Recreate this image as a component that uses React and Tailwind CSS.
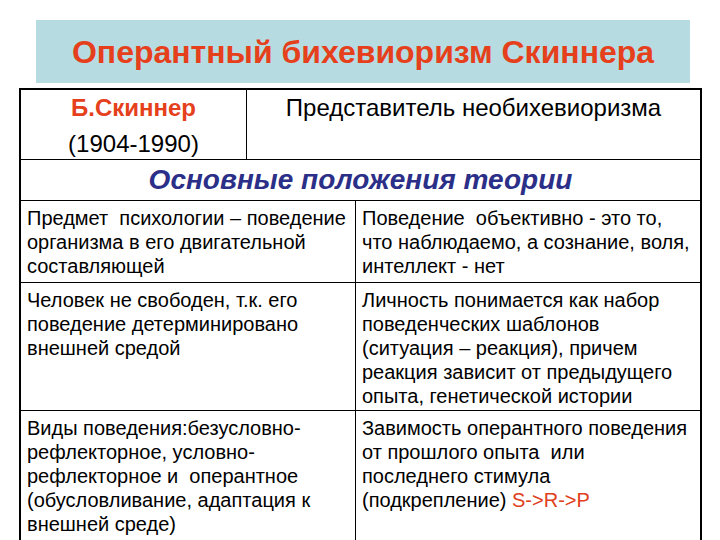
const Cell = ({ children, className = "" }) => (
  <div className={`px-[6px] pt-[5px] text-[20px] leading-[24px] text-black whitespace-nowrap ${className}`}>
    {children}
  </div>
);

const rows = [
  {
    left: (
      <>
        Предмет&nbsp; психологии – поведение
        <br />
        организма в его двигательной
        <br />
        составляющей
      </>
    ),
    right: (
      <>
        Поведение&nbsp; объективно - это то,
        <br />
        что наблюдаемо, а сознание, воля,
        <br />
        интеллект - нет
      </>
    ),
    h: "h-[82px]",
  },
  {
    left: (
      <>
        Человек не свободен, т.к. его
        <br />
        поведение детерминировано
        <br />
        внешней средой
      </>
    ),
    right: (
      <>
        Личность понимается как набор
        <br />
        поведенческих шаблонов
        <br />
        (ситуация – реакция), причем
        <br />
        реакция зависит от предыдущего
        <br />
        опыта, генетической истории
      </>
    ),
    h: "h-[128px]",
  },
  {
    left: (
      <>
        Виды поведения:безусловно-
        <br />
        рефлекторное, условно-
        <br />
        рефлекторное и&nbsp; оперантное
        <br />
        (обусловливание, адаптация к
        <br />
        внешней среде)
      </>
    ),
    right: (
      <>
        Завимость оперантного поведения
        <br />
        от прошлого опыта&nbsp; или
        <br />
        последнего стимула
        <br />
        (подкрепление) <span className="text-[#e0401c]">S-&gt;R-&gt;P</span>
      </>
    ),
    h: "h-[140px]",
  },
];

export default function App() {
  return (
    <div
      className="w-[720px] h-[540px] overflow-hidden bg-white"
      style={{ fontFamily: '"Liberation Sans", Arial, sans-serif' }}
    >
      <div className="pt-[20px] pl-[36px]">
        <div className="h-[63px] w-[654px] bg-[#b6dce2] flex items-center justify-center">
          <h1 className="text-[32px] font-bold text-[#e5401b] whitespace-nowrap">
            Оперантный бихевиоризм Скиннера
          </h1>
        </div>
      </div>

      <div className="mt-[5px] ml-[19px] w-[683px] border-2 border-black">
        <div className="grid grid-cols-[226px_1fr] h-[70px] border-b border-black">
          <div className="border-r border-black flex flex-col items-center pt-[4px] text-[24px] leading-[28px]">
            <span className="font-bold text-[#e5401b]">Б.Скиннер</span>
            <span className="mt-[8px] text-black">(1904-1990)</span>
          </div>
          <div className="flex justify-center pt-[4px] text-[24px] leading-[28px] text-black whitespace-nowrap">
            Представитель необихевиоризма
          </div>
        </div>

        <div className="h-[41px] border-b border-black flex items-center justify-center">
          <span className="text-[28px] font-bold italic text-[#2b2f88]">
            Основные положения теории
          </span>
        </div>

        {rows.map((r, i) => (
          <div
            key={i}
            className={`grid grid-cols-[335px_1fr] ${r.h} ${i < rows.length - 1 ? "border-b border-black" : ""}`}
          >
            <Cell className="border-r border-black">{r.left}</Cell>
            <Cell>{r.right}</Cell>
          </div>
        ))}
      </div>
    </div>
  );
}
